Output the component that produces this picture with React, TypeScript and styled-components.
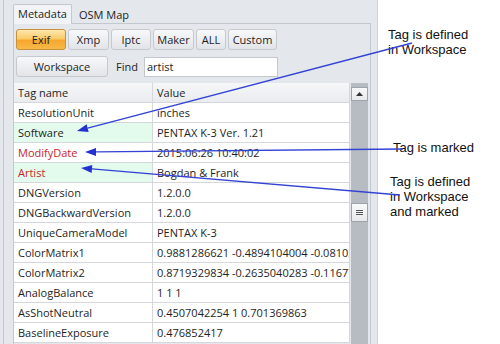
import React from "react";
import styled, { createGlobalStyle } from "styled-components";

const GlobalStyle = createGlobalStyle`
  body { margin: 0; background: #ffffff; }
  * { box-sizing: border-box; }
`;

const Page = styled.div`
  position: relative;
  display: flex;
  width: 500px;
  height: 344px;
  overflow: hidden;
  font-family: "Open Sans", "Noto Sans", sans-serif;
  font-size: 11px;
  color: #1e1e1e;
`;

const LeftPane = styled.div`
  width: 378px;
  height: 100%;
  background: #e4e7eb;
  border-right: 1px solid #cfd3d9;
  padding-left: 3px;
`;

const WindowEdge = styled.div`
  height: 100%;
  border-left: 1px solid #c3c7ce;
  padding: 3px 6px 0 9px;
  display: flex;
  flex-direction: column;
`;

const TabStrip = styled.div`
  display: flex;
  height: 20px;
  align-items: flex-end;
`;

const Tab = styled.div<{ $active?: boolean }>`
  height: ${(p) => (p.$active ? "20px" : "19px")};
  padding: 0 ${(p) => (p.$active ? "4px" : "6px")};
  line-height: 18px;
  font-size: 11px;
  background: ${(p) => (p.$active ? "#f1f3f6" : "transparent")};
  border: 1px solid ${(p) => (p.$active ? "#c3c7ce" : "transparent")};
  border-bottom: none;
  border-radius: 2px 2px 0 0;
  margin-bottom: -1px;
  position: relative;
  z-index: 1;
`;

const Panel = styled.div`
  flex: 1;
  border: 1px solid #c3c7ce;
  border-bottom: none;
  padding: 5px 0 0 2px;
  display: flex;
  flex-direction: column;
`;

const ButtonRow = styled.div`
  display: flex;
  align-items: center;
  gap: 2px;
  height: 21px;
  margin-bottom: 6px;
`;

const Button = styled.div<{ $w: number; $active?: boolean }>`
  width: ${(p) => p.$w}px;
  height: 21px;
  display: flex;
  align-items: center;
  justify-content: center;
  border-radius: 3px;
  font-size: 11px;
  border: 1px solid ${(p) => (p.$active ? "#c8913c" : "#c6c9ce")};
  background: ${(p) =>
    p.$active
      ? "linear-gradient(#fde7b0 0%, #fbcb6a 45%, #f5a730 55%, #f8b948 100%)"
      : "linear-gradient(#f7f8fa 0%, #eceef1 50%, #e2e4e8 100%)"};
`;

const FindLabel = styled.span`
  margin: 0 4px 0 6px;
  font-size: 11px;
`;

const FindInput = styled.div`
  width: 134px;
  height: 20px;
  background: #ffffff;
  border: 1px solid #c3c7ce;
  padding-left: 2px;
  line-height: 18px;
  font-size: 11px;
`;

const TableFrame = styled.div`
  flex: 1;
  display: flex;
  margin-left: -3px;
  border-left: 1px solid #c3c7ce;
`;

const Grid = styled.div`
  width: 336px;
  display: flex;
  flex-direction: column;
`;

const Row = styled.div`
  display: grid;
  grid-template-columns: 139px 197px;
  height: 20px;
  border-bottom: 1px solid #d5d7db;
`;

const HeaderRow = styled(Row)`
  background: linear-gradient(#f6f7f8, #e9ebee);
`;

const Cell = styled.div<{ $green?: boolean; $red?: boolean }>`
  padding-left: 4px;
  line-height: 19px;
  white-space: nowrap;
  overflow: hidden;
  border-right: 1px solid #d5d7db;
  background: ${(p) => (p.$green ? "#e3fbed" : "#ffffff")};
  color: ${(p) => (p.$red ? "#c8242c" : "#1e1e1e")};
`;

const HeadCell = styled(Cell)`
  background: transparent;
`;

const Scrollbar = styled.div`
  width: 17px;
  margin-left: 1px;
  background: #b7bbc2;
  display: flex;
  flex-direction: column;
  align-items: stretch;
`;

const ScrollButton = styled.div<{ $top: number; $h: number }>`
  height: ${(p) => p.$h}px;
  margin-top: ${(p) => p.$top}px;
  background: linear-gradient(#f8f9fa, #e6e8eb);
  border: 1px solid #9fa4ab;
  display: flex;
  align-items: center;
  justify-content: center;
`;

const Notes = styled.div`
  flex: 1;
  padding-left: 10px;
  font-family: "Liberation Sans", Arial, sans-serif;
  font-size: 13px;
  line-height: 15px;
  color: #111111;
`;

const Note = styled.div<{ $top: number; $indent: number }>`
  margin-top: ${(p) => p.$top}px;
  padding-left: ${(p) => p.$indent}px;
`;

const Arrows = styled.svg`
  position: absolute;
  left: 0;
  top: 0;
  pointer-events: none;
`;

type Entry = { tag: string; value: string; green?: boolean; red?: boolean };

const rows: Entry[] = [
  { tag: "ResolutionUnit", value: "inches" },
  { tag: "Software", value: "PENTAX K-3 Ver. 1.21", green: true },
  { tag: "ModifyDate", value: "2015:06:26 10:40:02", red: true },
  { tag: "Artist", value: "Bogdan & Frank", green: true, red: true },
  { tag: "DNGVersion", value: "1.2.0.0" },
  { tag: "DNGBackwardVersion", value: "1.2.0.0" },
  { tag: "UniqueCameraModel", value: "PENTAX K-3" },
  { tag: "ColorMatrix1", value: "0.9881286621 -0.4894104004 -0.0810394287" },
  { tag: "ColorMatrix2", value: "0.8719329834 -0.2635040283 -0.1167755127" },
  { tag: "AnalogBalance", value: "1 1 1" },
  { tag: "AsShotNeutral", value: "0.4507042254 1 0.701369863" },
  { tag: "BaselineExposure", value: "0.476852417" },
];

const Arrow: React.FC<{ x1: number; y1: number; x2: number; y2: number }> = ({ x1, y1, x2, y2 }) => {
  // arrowhead sits at (x2, y2)
  const a = Math.atan2(y2 - y1, x2 - x1);
  const len = 11;
  const half = 4;
  const bx = x2 - len * Math.cos(a);
  const by = y2 - len * Math.sin(a);
  const px = -Math.sin(a) * half;
  const py = Math.cos(a) * half;
  return (
    <g>
      <line x1={x1} y1={y1} x2={bx} y2={by} stroke="#3343d4" strokeWidth={1.3} />
      <polygon points={`${x2},${y2} ${bx + px},${by + py} ${bx - px},${by - py}`} fill="#2232d2" />
    </g>
  );
};

export default function App() {
  return (
    <>
      <GlobalStyle />
      <Page>
        <LeftPane>
          <WindowEdge>
            <TabStrip>
              <Tab $active>Metadata</Tab>
              <Tab>OSM Map</Tab>
            </TabStrip>
            <Panel>
              <ButtonRow>
                <Button $w={50} $active>Exif</Button>
                <Button $w={41}>Xmp</Button>
                <Button $w={40}>Iptc</Button>
                <Button $w={41}>Maker</Button>
                <Button $w={30}>ALL</Button>
                <Button $w={49}>Custom</Button>
              </ButtonRow>
              <ButtonRow>
                <Button $w={92}>Workspace</Button>
                <FindLabel>Find</FindLabel>
                <FindInput>artist</FindInput>
              </ButtonRow>
              <TableFrame>
                <Grid>
                  <HeaderRow>
                    <HeadCell>Tag name</HeadCell>
                    <HeadCell>Value</HeadCell>
                  </HeaderRow>
                  {rows.map((r) => (
                    <Row key={r.tag}>
                      <Cell $green={r.green} $red={r.red}>{r.tag}</Cell>
                      <Cell>{r.value}</Cell>
                    </Row>
                  ))}
                </Grid>
                <Scrollbar>
                  <ScrollButton $top={4} $h={14}>
                    <svg width="7" height="4" viewBox="0 0 7 4">
                      <polygon points="0,4 3.5,0 7,4" fill="#333" />
                    </svg>
                  </ScrollButton>
                  <ScrollButton $top={102} $h={19}>
                    <svg width="7" height="7" viewBox="0 0 7 7">
                      <path d="M0 1.5h7M0 3.5h7M0 5.5h7" stroke="#555" strokeWidth="1" />
                    </svg>
                  </ScrollButton>
                </Scrollbar>
              </TableFrame>
            </Panel>
          </WindowEdge>
        </LeftPane>
        <Notes>
          <Note $top={27} $indent={0}>Tag is defined<br />in Workspace</Note>
          <Note $top={83} $indent={5}>Tag is marked</Note>
          <Note $top={19} $indent={2}>Tag is defined<br />in Workspace<br />and marked</Note>
        </Notes>
        <Arrows width="500" height="344">
          <Arrow x1={412} y1={43} x2={77} y2={131} />
          <Arrow x1={403} y1={149} x2={85} y2={152} />
          <Arrow x1={400} y1={195} x2={81} y2={168} />
        </Arrows>
      </Page>
    </>
  );
}
